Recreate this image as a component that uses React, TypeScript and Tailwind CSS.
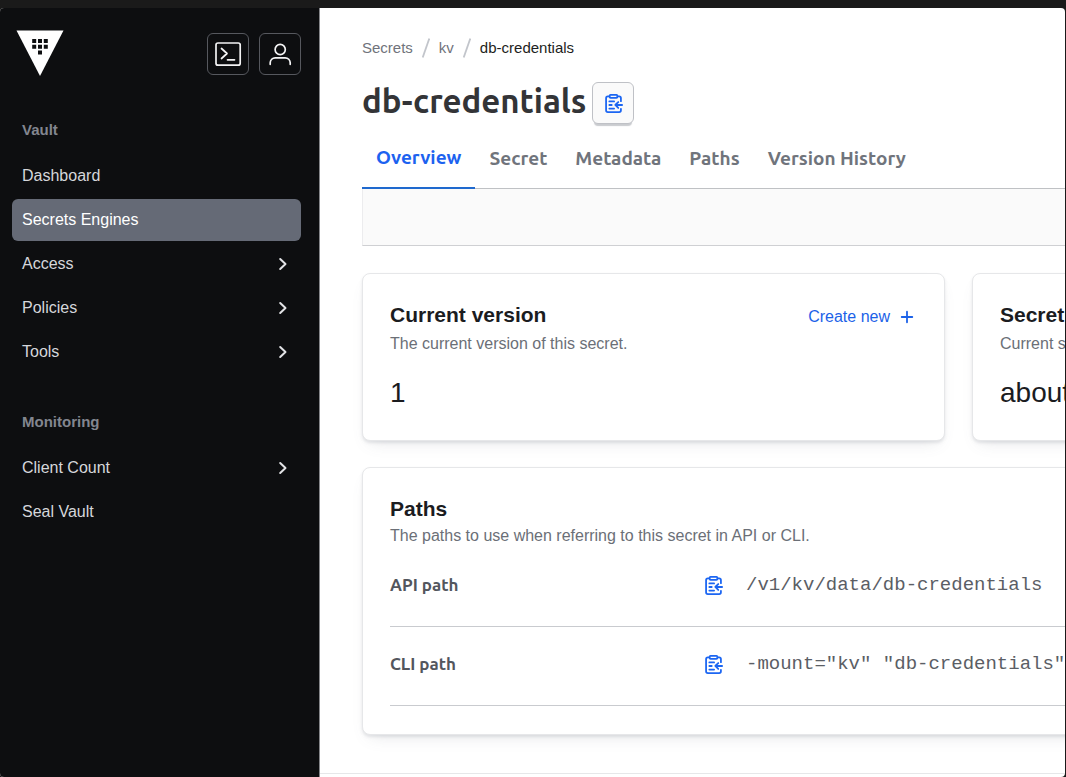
import React from "react";

const heading = "font-['Ubuntu','Noto_Sans',sans-serif]";

function VaultLogo() {
  return (
    <svg width="48" height="48" viewBox="0 0 48 48" aria-hidden="true">
      <path d="M0.5 0.5H47.5L24 46Z" fill="#fff" />
      <g fill="#0d0e10">
        <path d="M16.2 9h4v4h-4zM22 9h4v4h-4zM27.8 9h4v4h-4z" />
        <path d="M16.2 14.800h4v4h-4zM22 14.800h4v4h-4zM27.8 14.800h4v4h-4z" />
        <path d="M22 20.500h4v4h-4z" />
      </g>
    </svg>
  );
}

function TerminalIcon() {
  return (
    <svg width="28" height="28" viewBox="0 0 28 28" fill="none" stroke="#f4f4f5" strokeWidth="1.7" strokeLinecap="round" strokeLinejoin="round" aria-hidden="true">
      <rect x="2" y="3" width="24.200" height="22.200" rx="2" />
      <path d="M7.500 8.500l5.500 5-5.500 5M13.500 19.800h7" />
    </svg>
  );
}

function UserIcon() {
  return (
    <svg width="28" height="28" viewBox="0 0 28 28" fill="none" stroke="#f4f4f5" strokeWidth="1.7" strokeLinecap="round" aria-hidden="true">
      <circle cx="14.200" cy="9.500" r="5.100" />
      <path d="M4.200 24.300v-1.500a5 5 0 0 1 5-5h10a5 5 0 0 1 5 5v1.500" />
    </svg>
  );
}

function ChevronRight() {
  return (
    <svg width="18" height="18" viewBox="0 0 18 18" fill="none" stroke="#e2e3e6" strokeWidth="2" strokeLinecap="round" strokeLinejoin="round" aria-hidden="true">
      <path d="M7.200 4l5.300 5-5.300 5" />
    </svg>
  );
}

function ClipboardCopyIcon() {
  return (
    <svg width="19" height="19" viewBox="0 0 16 16" fill="none" stroke="#1c66f2" strokeWidth="1.500" strokeLinecap="round" strokeLinejoin="round" aria-hidden="true">
      <path d="M4.500 2h-1.250A1.500 1.500 0 0 0 1.750 3.500v10.250a1.500 1.500 0 0 0 1.500 1.500h9.500a1.500 1.500 0 0 0 1.500-1.500v-1.250M11.500 2h1.250a1.500 1.500 0 0 1 1.500 1.500v2.500" />
      <rect x="4.750" y="0.750" width="6.500" height="2.500" rx="0.750" />
      <path d="M4.500 6.250h4M4.500 9.250h2M4.500 12.250h4M15.250 9.250h-5.500M12 6.750l-2.500 2.500 2.500 2.500" />
    </svg>
  );
}

type NavEntry = { label: string; active?: boolean; expandable?: boolean };

function NavSection({ title, items }: { title: string; items: NavEntry[] }) {
  return (
    <section>
      <h2 className="mb-0.5 flex h-[46px] items-center px-2.5 text-[15px] font-bold text-[#83868f]">{title}</h2>
      <ul className="flex flex-col gap-0.5">
        {items.map((item) => (
          <li key={item.label}>
            <a
              href="#"
              aria-current={item.active ? "page" : undefined}
              className={
                item.active
                  ? "flex h-[42px] items-center justify-between rounded-md bg-[#656a76] px-2.5 text-white"
                  : "flex h-[42px] items-center justify-between rounded-md px-2.5 text-[#d5d7db]"
              }
            >
              {item.label}
              {item.expandable && <ChevronRight />}
            </a>
          </li>
        ))}
      </ul>
    </section>
  );
}

function Sidebar() {
  return (
    <aside className="w-80 shrink-0 border-r border-[#85868a] bg-[#0d0e10] text-base">
      <div className="flex items-start justify-between pt-[22px] pr-[18px] pl-4">
        <a href="#" aria-label="Vault home">
          <VaultLogo />
        </a>
        <div className="flex gap-2.5 pt-[3px]">
          <button type="button" aria-label="Console" className="flex size-[42px] items-center justify-center rounded-md border border-[#56585e]">
            <TerminalIcon />
          </button>
          <button type="button" aria-label="User menu" className="flex size-[42px] items-center justify-center rounded-md border border-[#56585e]">
            <UserIcon />
          </button>
        </div>
      </div>
      <nav className="flex flex-col gap-[26px] pt-[29px] pr-[18px] pl-3">
        <NavSection
          title="Vault"
          items={[
            { label: "Dashboard" },
            { label: "Secrets Engines", active: true },
            { label: "Access", expandable: true },
            { label: "Policies", expandable: true },
            { label: "Tools", expandable: true },
          ]}
        />
        <NavSection title="Monitoring" items={[{ label: "Client Count", expandable: true }, { label: "Seal Vault" }]} />
      </nav>
    </aside>
  );
}

function Slash() {
  return (
    <svg width="8" height="20" viewBox="0 0 8 20" stroke="#c2c5cb" strokeWidth="1.800" aria-hidden="true">
      <path d="M7.300 0.500L0.700 19.500" />
    </svg>
  );
}

const cardStyle =
  "rounded-lg border border-[#e6e7e9] bg-white px-[27px] pt-[27px] shadow-[0_2px_3px_rgba(101,106,118,0.15),0_8px_16px_-8px_rgba(101,106,118,0.2)]";
const cardTitle = "text-[21px] leading-7 font-bold text-[#1b1c1f]";
const cardText = "text-base leading-[30px] whitespace-nowrap text-[#6b6f77]";
const cardFigure = "pt-4 pb-[29px] text-[28px] leading-9 whitespace-nowrap text-[#1b1c1f]";

function PathRow({ label, value }: { label: string; value: string }) {
  return (
    <div className="flex h-[79px] items-center border-b border-[#c9cbcf] pb-1">
      <dt className={`w-[314px] shrink-0 text-[17px] font-bold text-[#53565d] ${heading}`}>{label}</dt>
      <dd className="flex items-center gap-[23px]">
        <button type="button" aria-label={`Copy ${label}`}>
          <ClipboardCopyIcon />
        </button>
        <code className="font-['Liberation_Mono',monospace] text-[19px] whitespace-nowrap text-[#5b5e65]">{value}</code>
      </dd>
    </div>
  );
}

export default function App() {
  const tabs = ["Overview", "Secret", "Metadata", "Paths", "Version History"];
  return (
    <div className="min-h-screen bg-[#1a1a1a] pt-2 pr-px font-['Liberation_Sans',sans-serif]">
      <div className="flex min-h-[calc(100vh-8px)] overflow-hidden rounded-sm bg-white">
        <Sidebar />
        <main className="min-w-0 flex-1 overflow-hidden">
          <div className="min-w-[1235px] pl-[42px]">
            <nav aria-label="Breadcrumb" className="flex items-center gap-[9px] pt-[30px] text-[15px] leading-5 text-[#70737b]">
              <a href="#">Secrets</a>
              <Slash />
              <a href="#">kv</a>
              <Slash />
              <span className="text-[#1d1e21]">db-credentials</span>
            </nav>

            <div className="flex items-center gap-1.5 pt-6">
              <h1 className={`pb-1 text-[33px] leading-[38px] font-bold text-[#333437] ${heading}`}>db-credentials</h1>
              <button
                type="button"
                aria-label="Copy secret path"
                className="flex size-[42px] items-center justify-center rounded-md border border-[#bfc1c6] bg-[#fafafa] shadow-[0_4px_1px_-2px_rgba(101,106,118,0.35)]"
              >
                <ClipboardCopyIcon />
              </button>
            </div>

            <nav aria-label="Secret views" className={`mt-1 flex border-b border-[#bfc1c4] text-[19px] font-bold text-[#70747c] ${heading}`}>
              {tabs.map((tab, i) => (
                <a
                  key={tab}
                  href="#"
                  className={
                    i === 0
                      ? "-mb-px flex h-[61px] items-center border-b-2 border-[#1f69ce] px-3.5 text-[#1c62f0]"
                      : "flex h-[60px] items-center px-3.5"
                  }
                >
                  {tab}
                </a>
              ))}
            </nav>
            <div className="h-[57px] border-b border-l border-b-[#cfd0d3] border-l-[#ececee] bg-[#fafafa]" />

            <div className="grid grid-cols-2 gap-[27px] pt-[27px]">
              <section className={cardStyle}>
                <div className="flex h-7 items-start justify-between pr-[3px]">
                  <h2 className={cardTitle}>Current version</h2>
                  <a href="#" className="flex items-center gap-2.5 pt-1 text-base text-[#1c62e8]">
                    Create new
                    <svg width="14" height="14" viewBox="0 0 14 14" stroke="currentColor" strokeWidth="1.800" strokeLinecap="round" aria-hidden="true">
                      <path d="M7 1.700v10.600M1.700 7h10.600" />
                    </svg>
                  </a>
                </div>
                <p className={cardText}>The current version of this secret.</p>
                <p className={cardFigure}>1</p>
              </section>
              <section className={cardStyle}>
                <h2 className={cardTitle}>Secret age</h2>
                <p className={cardText}>Current secret version age.</p>
                <p className={cardFigure}>about 1 hour</p>
              </section>
            </div>

            <section className={`${cardStyle} mt-[26px] pb-7`}>
              <h2 className={cardTitle}>Paths</h2>
              <p className="text-base leading-[25px] text-[#6b6f77]">The paths to use when referring to this secret in API or CLI.</p>
              <dl>
                <PathRow label="API path" value="/v1/kv/data/db-credentials" />
                <PathRow label="CLI path" value={'-mount="kv" "db-credentials"'} />
              </dl>
            </section>
          </div>
          <footer className="mt-[38px] border-t border-[#e6e7e9]" />
        </main>
      </div>
    </div>
  );
}
